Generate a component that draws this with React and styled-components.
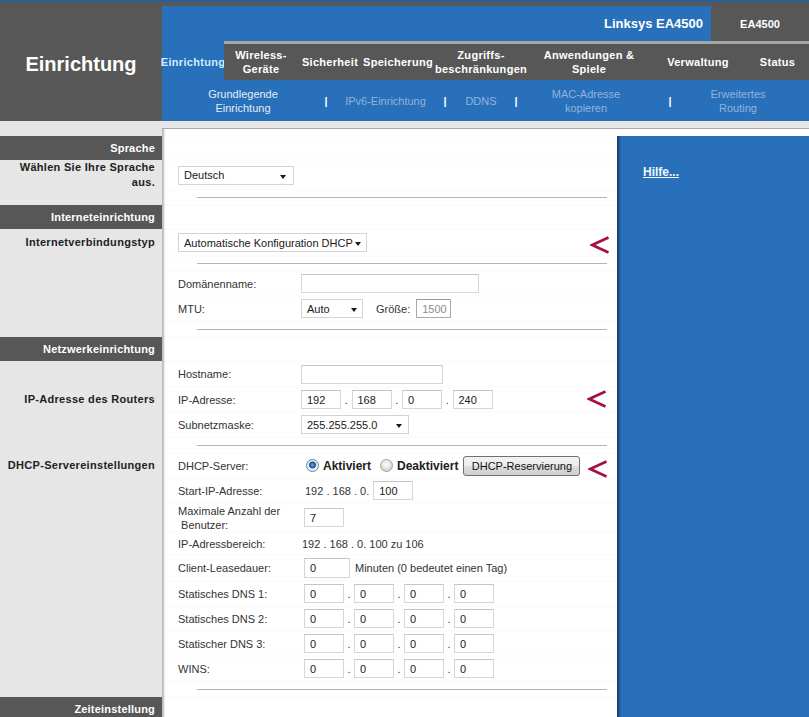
import React from "react";
import styled, { createGlobalStyle } from "styled-components";

const FONT = `"Liberation Sans", Arial, sans-serif`;
const BLUE = "#2870b9";
const DARK = "#575757";
const LIGHT = "#e6e6e6";

const GlobalStyle = createGlobalStyle`
  html, body { margin: 0; padding: 0; overflow: hidden; background: #fff; }
  body { font-family: ${FONT}; }
  * { box-sizing: border-box; }
`;

const Page = styled.div`
  width: 809px;
  height: 717px;
  overflow: hidden;
  border-top: 2px solid #2c5e95;
  background: #fff;
`;

/* ---------- header ---------- */
const Header = styled.header`
  display: flex;
  height: 119px;
  background: ${DARK};
`;

const Brand = styled.div`
  width: 162px;
  flex: none;
  display: flex;
  align-items: center;
  justify-content: center;
  padding-top: 5px;
  color: #fff;
  font: bold 20px ${FONT};
`;

const HeaderMain = styled.div`
  flex: 1;
  display: flex;
  flex-direction: column;
`;

const TopRow = styled.div`
  display: flex;
  height: 39px;
`;

const ModelBar = styled.div`
  flex: 1;
  margin-top: 4px;
  background: ${BLUE};
  display: flex;
  align-items: center;
  justify-content: flex-end;
  padding-right: 8px;
  color: #fff;
  font: bold 13px ${FONT};
`;

const ModelTag = styled.div`
  width: 98px;
  flex: none;
  display: flex;
  align-items: center;
  justify-content: center;
  padding-top: 4px;
  color: #fff;
  font: bold 11px ${FONT};
`;

const Nav = styled.nav`
  display: flex;
  height: 39px;
`;

const Tab = styled.div`
  width: ${(p) => p.$w}px;
  flex: none;
  display: flex;
  flex-direction: column;
  align-items: center;
  justify-content: center;
  text-align: center;
  white-space: nowrap;
  font: bold 11px/14px ${FONT};
  letter-spacing: 0.3px;
  color: ${(p) => (p.$active ? "#cdeeff" : "#fff")};
  background: ${(p) => (p.$active ? BLUE : DARK)};
  border-top: 3px solid ${(p) => (p.$active ? BLUE : "#a6a6a6")};
`;

const SubNav = styled.div`
  display: flex;
  align-items: center;
  height: 41px;
  background: ${BLUE};
`;

const SubItem = styled.div`
  width: ${(p) => p.$w}px;
  margin-left: ${(p) => p.$ml || 0}px;
  flex: none;
  text-align: center;
  font: 11px/14px ${FONT};
  color: ${(p) => (p.$active ? "#e4ecf6" : "#93b3dd")};
`;

const SubSep = styled.div`
  width: ${(p) => p.$w}px;
  flex: none;
  text-align: center;
  font: bold 11px ${FONT};
  color: #fff;
`;

const Band = styled.div`
  display: flex;
  height: 8px;
  background: ${LIGHT};
`;

const BandEdge = styled.div`
  margin-left: 162px;
  flex: 1;
  border-bottom: 1px solid #a9a9a9;
`;

/* ---------- body ---------- */
const Body = styled.div`
  display: flex;
  align-items: stretch;
`;

const Sheet = styled.div`
  width: 617px;
  flex: none;
  display: grid;
  grid-template-columns: 162px 455px;
`;

const Side = styled.div`
  background: ${LIGHT};
  display: flex;
  align-items: center;
  justify-content: flex-end;
  text-align: right;
  padding-right: 7px;
  white-space: nowrap;
  font: bold 11px/15px ${FONT};
  letter-spacing: 0.3px;
  color: #222;
`;

const SideBar = styled(Side)`
  background: ${DARK};
  color: #fff;
  letter-spacing: 0.2px;
`;

const Main = styled.div`
  height: ${(p) => p.$h}px;
  background: #fff;
  box-shadow: inset 3px 0 2px -1px rgba(0, 0, 0, 0.28);
  display: flex;
  align-items: center;
  padding-left: ${(p) => (p.$rule ? 35 : 16)}px;
  padding-right: ${(p) => (p.$rule ? 10 : 0)}px;
  font: 11px ${FONT};
  color: #333;
`;

const Rule = styled.div`
  flex: 1;
  height: 1px;
  background: #b3b4c2;
`;

const FieldLabel = styled.div`
  width: ${(p) => p.$w || 123}px;
  flex: none;
  font: 11px/14px ${FONT};
  color: #333;
  white-space: nowrap;
`;

const Text = styled.span`
  margin-left: ${(p) => p.$ml || 0}px;
  margin-right: ${(p) => p.$mr || 0}px;
  white-space: nowrap;
  font: 11px ${FONT};
  color: #333;
`;

const Select = styled.div`
  width: ${(p) => p.$w}px;
  height: 19px;
  flex: none;
  display: flex;
  align-items: center;
  padding-left: 5px;
  padding-right: ${(p) => p.$caret || 6}px;
  border: 1px solid #d3d3d3;
  background: #fff;
  font: 11px ${FONT};
  color: #1a1a1a;
  white-space: nowrap;
`;

const Caret = styled.span`
  margin-left: auto;
  margin-top: 3px;
  width: 0;
  height: 0;
  border-left: 3.5px solid transparent;
  border-right: 3.5px solid transparent;
  border-top: 4px solid #1a1a1a;
`;

const TextBox = styled.input.attrs({ type: "text", readOnly: true })`
  width: ${(p) => p.$w}px;
  height: ${(p) => p.$h || 19}px;
  flex: none;
  margin: 0 0 0 ${(p) => p.$ml || 0}px;
  padding: 0 0 0 5px;
  border: 1px solid ${(p) => (p.disabled ? "#a9a9a9" : "#d6d6d6")};
  border-top-color: ${(p) => (p.disabled ? "#9a9a9a" : "#c5c5c5")};
  background: #fff;
  font: 11px ${FONT};
  color: ${(p) => (p.disabled ? "#8c8c8c" : "#1a1a1a")};
  outline: none;
`;

const Dot = styled.span`
  width: ${(p) => p.$w}px;
  flex: none;
  text-align: center;
  font: 11px ${FONT};
  color: #333;
`;

const Radio = styled.span`
  width: 13px;
  height: 13px;
  flex: none;
  margin-left: ${(p) => p.$ml || 0}px;
  margin-right: 4px;
  border-radius: 50%;
  border: 1px solid ${(p) => (p.$on ? "#5b7fa6" : "#a3a3a3")};
  background: ${(p) =>
    p.$on
      ? "radial-gradient(circle at 50% 45%, #6fa6dc 0, #1f5c9e 2.6px, #2a5f98 3.2px, #dfe7f0 3.8px, #f7f9fb 6px)"
      : "radial-gradient(circle at 50% 40%, #fbfbfb 0, #e6e6e6 4px, #d2d2d2 6px)"};
`;

const RadioText = styled.span`
  font: bold 12px ${FONT};
  color: #222;
  margin-right: ${(p) => p.$mr || 0}px;
  white-space: nowrap;
`;

const Button = styled.button`
  width: 117px;
  height: 20px;
  flex: none;
  padding: 0;
  border: 1px solid #707070;
  border-radius: 3px;
  background: linear-gradient(#f3f3f3 0%, #ebebeb 50%, #dddddd 51%, #cfcfcf 100%);
  font: 11px ${FONT};
  color: #111;
`;

const Mark = styled.svg`
  flex: none;
  margin-left: auto;
  margin-right: ${(p) => p.$r}px;
  margin-top: ${(p) => p.$dy || 0}px;
`;

const HelpColumn = styled.div`
  flex: 1;
  display: flex;
  flex-direction: column;
  padding-top: 7px;
  background: #fff;
`;

const HelpPanel = styled.div`
  flex: 1;
  background: ${BLUE};
  box-shadow: inset 4px 0 3px -2px rgba(10, 30, 60, 0.7);
  padding: 26px 0 0 26px;
`;

const HelpLink = styled.a`
  font: bold 12px/14px ${FONT};
  color: #eef6ff;
  text-decoration: underline;
`;

/* ---------- helpers ---------- */
function Chevron({ r = 7, dy = 0 }) {
  return (
    <Mark $r={r} $dy={dy} width="20" height="20" viewBox="0 0 20 20">
      <polyline
        points="18.5,2.5 2.2,10 18.5,17.5"
        fill="none"
        stroke="#a5103f"
        strokeWidth="2.6"
      />
    </Mark>
  );
}

function DropDown({ w, caret, children }) {
  return (
    <Select $w={w} $caret={caret}>
      {children}
      <Caret />
    </Select>
  );
}

function IpFields({ values, gap }) {
  return values.map((v, i) => (
    <React.Fragment key={i}>
      {i > 0 && <Dot $w={gap}>.</Dot>}
      <TextBox $w={40} value={v} />
    </React.Fragment>
  ));
}

const tabs = [
  { l: ["Einrichtung"], w: 62, active: true },
  { l: ["Wireless-", "Geräte"], w: 74 },
  { l: ["Sicherheit"], w: 64 },
  { l: ["Speicherung"], w: 72 },
  { l: ["Zugriffs-", "beschränkungen"], w: 94 },
  { l: ["Anwendungen &", "Spiele"], w: 122 },
  { l: ["Verwaltung"], w: 96 },
  { l: ["Status"], w: 63 },
];

const DL = 126;

export default function App() {
  return (
    <>
      <GlobalStyle />
      <Page>
        <Header>
          <Brand>Einrichtung</Brand>
          <HeaderMain>
            <TopRow>
              <ModelBar>Linksys EA4500</ModelBar>
              <ModelTag>EA4500</ModelTag>
            </TopRow>
            <Nav>
              {tabs.map((t) => (
                <Tab key={t.l.join("")} $w={t.w} $active={t.active}>
                  {t.l.map((line) => (
                    <span key={line}>{line}</span>
                  ))}
                </Tab>
              ))}
            </Nav>
            <SubNav>
              <SubItem $w={142} $ml={10} $active>
                Grundlegende
                <br />
                Einrichtung
              </SubItem>
              <SubSep $w={24}>|</SubSep>
              <SubItem $w={95}>IPv6-Einrichtung</SubItem>
              <SubSep $w={24}>|</SubSep>
              <SubItem $w={48}>DDNS</SubItem>
              <SubSep $w={22}>|</SubSep>
              <SubItem $w={118}>
                MAC-Adresse
                <br />
                kopieren
              </SubItem>
              <SubSep $w={50}>|</SubSep>
              <SubItem $w={86}>
                Erweitertes
                <br />
                Routing
              </SubItem>
            </SubNav>
          </HeaderMain>
        </Header>
        <Band>
          <BandEdge />
        </Band>
        <Body>
          <Sheet>
            <Side />
            <Main $h={7} />

            <SideBar>Sprache</SideBar>
            <Main $h={24} />

            <Side>
              Wählen Sie Ihre Sprache
              <br />
              aus.
            </Side>
            <Main $h={30}>
              <DropDown w={116} caret={7}>Deutsch</DropDown>
            </Main>

            <Side />
            <Main $h={15} $rule>
              <Rule />
            </Main>

            <SideBar>Interneteinrichtung</SideBar>
            <Main $h={24} />

            <Side>Internetverbindungstyp</Side>
            <Main $h={27}>
              <DropDown w={189} caret={5}>Automatische Konfiguration DHCP</DropDown>
              <Chevron r={7} dy={5} />
            </Main>

            <Side />
            <Main $h={15} $rule>
              <Rule />
            </Main>

            <Side />
            <Main $h={25}>
              <FieldLabel>Domänenname:</FieldLabel>
              <TextBox $w={178} value="" />
            </Main>

            <Side />
            <Main $h={25}>
              <FieldLabel>MTU:</FieldLabel>
              <DropDown w={62} caret={5}>Auto</DropDown>
              <Text $ml={13} $mr={6}>Größe:</Text>
              <TextBox $w={35} value="1500" disabled />
            </Main>

            <Side />
            <Main $h={16} $rule>
              <Rule />
            </Main>

            <SideBar>Netzwerkeinrichtung</SideBar>
            <Main $h={24} />

            <Side />
            <Main $h={26}>
              <FieldLabel>Hostname:</FieldLabel>
              <TextBox $w={142} value="" />
            </Main>

            <Side>IP-Adresse des Routers</Side>
            <Main $h={25}>
              <FieldLabel>IP-Adresse:</FieldLabel>
              <IpFields values={["192", "168", "0", "240"]} gap={10.5} />
              <Chevron r={10} dy={-2} />
            </Main>

            <Side />
            <Main $h={25}>
              <FieldLabel>Subnetzmaske:</FieldLabel>
              <DropDown w={108} caret={6}>255.255.255.0</DropDown>
            </Main>

            <Side />
            <Main $h={16} $rule>
              <Rule />
            </Main>

            <Side>DHCP-Servereinstellungen</Side>
            <Main $h={25}>
              <FieldLabel $w={DL}>DHCP-Server:</FieldLabel>
              <Radio $on $ml={2} />
              <RadioText $mr={9}>Aktiviert</RadioText>
              <Radio />
              <RadioText $mr={5}>Deaktiviert</RadioText>
              <Button type="button">DHCP-Reservierung</Button>
              <Chevron r={9} dy={7} />
            </Main>

            <Side />
            <Main $h={25}>
              <FieldLabel $w={DL}>Start-IP-Adresse:</FieldLabel>
              <Text $ml={1} $mr={4}>192 . 168 . 0.</Text>
              <TextBox $w={40} value="100" />
            </Main>

            <Side />
            <Main $h={29}>
              <FieldLabel $w={DL}>
                Maximale Anzahl der
                <br />
                &nbsp;Benutzer:
              </FieldLabel>
              <TextBox $w={40} value="7" />
            </Main>

            <Side />
            <Main $h={23}>
              <FieldLabel $w={124}>IP-Adressbereich:</FieldLabel>
              <Text>192 . 168 . 0. 100 zu 106</Text>
            </Main>

            <Side />
            <Main $h={26}>
              <FieldLabel $w={DL}>Client-Leasedauer:</FieldLabel>
              <TextBox $w={46} $h={20} value="0" />
              <Text $ml={5}>Minuten (0 bedeutet einen Tag)</Text>
            </Main>

            <Side />
            <Main $h={25}>
              <FieldLabel $w={DL}>Statisches DNS 1:</FieldLabel>
              <IpFields values={["0", "0", "0", "0"]} gap={10} />
            </Main>

            <Side />
            <Main $h={25}>
              <FieldLabel $w={DL}>Statisches DNS 2:</FieldLabel>
              <IpFields values={["0", "0", "0", "0"]} gap={10} />
            </Main>

            <Side />
            <Main $h={25}>
              <FieldLabel $w={DL}>Statischer DNS 3:</FieldLabel>
              <IpFields values={["0", "0", "0", "0"]} gap={10} />
            </Main>

            <Side />
            <Main $h={25}>
              <FieldLabel $w={DL}>WINS:</FieldLabel>
              <IpFields values={["0", "0", "0", "0"]} gap={10} />
            </Main>

            <Side />
            <Main $h={16} $rule>
              <Rule />
            </Main>

            <SideBar>Zeiteinstellung</SideBar>
            <Main $h={24} />
          </Sheet>
          <HelpColumn>
            <HelpPanel>
              <HelpLink href="#">Hilfe...</HelpLink>
            </HelpPanel>
          </HelpColumn>
        </Body>
      </Page>
    </>
  );
}
